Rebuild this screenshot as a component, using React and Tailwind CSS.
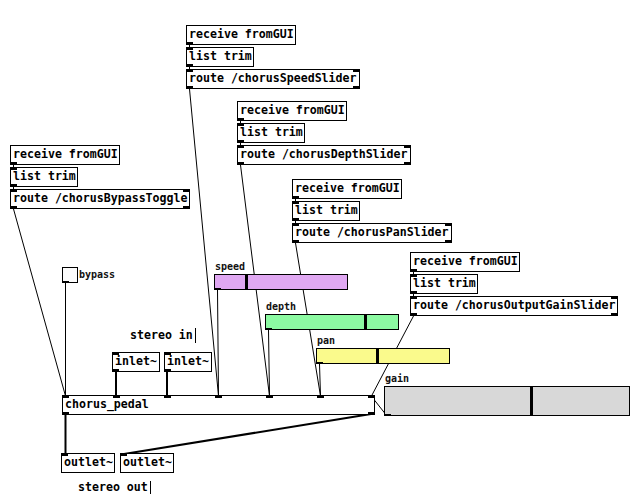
import React from "react";

const MONO = { fontFamily: '"DejaVu Sans Mono", "Liberation Mono", monospace' };

function Nubs({ n, w, side }) {
  const items = [];
  for (let i = 0; i < n; i++) {
    const left = n === 1 ? 0 : (i * (w - 7)) / (n - 1);
    items.push(
      <div
        key={i}
        className={"absolute h-[3px] w-[7px] bg-black " + (side === "top" ? "top-[-1px]" : "bottom-[-1px]")}
        style={{ left: left - 1 }}
      />
    );
  }
  return items;
}

function Box({ at, w, text, nin = 0, nout = 0 }) {
  const style = at ? { left: at[0], top: at[1], width: w } : { width: w };
  return (
    <div
      className={(at ? "absolute" : "relative") + " h-[20px] border border-black bg-white"}
      style={style}
    >
      <div
        className="pl-[2px] text-[11.6px] font-bold leading-[17px] text-black whitespace-nowrap"
        style={MONO}
      >
        {text}
      </div>
      <Nubs n={nin} w={w} side="top" />
      <Nubs n={nout} w={w} side="bottom" />
    </div>
  );
}

function Slider({ x, y, w, h, color, knob, label }) {
  return (
    <div className="absolute flex flex-col items-start gap-[1px]" style={{ left: x, top: y - 13 }}>
      <div className="pl-[1px] text-[10px] font-bold leading-[12px] text-[#111]" style={MONO}>
        {label}
      </div>
      <div className="relative border border-black" style={{ width: w, height: h, background: color }}>
        <div className="absolute top-0 bottom-0 w-[3px] bg-black" style={{ left: knob }} />
        <div className="absolute bottom-[-1px] left-[-1px] h-[2px] w-[7px] bg-black" />
      </div>
    </div>
  );
}

function Group({ x, y, route, rw }) {
  return (
    <div className="absolute flex flex-col items-start gap-[2px]" style={{ left: x, top: y }}>
      <Box w={110} text="receive fromGUI" nout={1} />
      <Box w={68} text="list trim" nin={1} nout={1} />
      <Box w={rw} text={route} nin={2} nout={2} />
    </div>
  );
}

function Comment({ x, y, text, bar }) {
  return (
    <div className="absolute flex items-center gap-[2px]" style={{ left: x, top: y }}>
      <span className="text-[11.6px] font-bold leading-[17px] text-black" style={MONO}>
        {text}
      </span>
      <span className="w-[1px] bg-black" style={{ height: bar }} />
    </div>
  );
}

const groups = [
  { x: 186, y: 25, route: "route /chorusSpeedSlider", rw: 174 },
  { x: 237, y: 101, route: "route /chorusDepthSlider", rw: 174 },
  { x: 292, y: 179, route: "route /chorusPanSlider", rw: 160 },
  { x: 410, y: 252, route: "route /chorusOutputGainSlider", rw: 208 },
  { x: 10, y: 145, route: "route /chorusBypassToggle", rw: 180 },
];

const thin = [
  [189.5, 89, 218.5, 396],
  [240.5, 165, 269.5, 396],
  [295.5, 243, 320.5, 396],
  [413.5, 316, 371.5, 396],
  [13.5, 209, 65.5, 396],
  [65.5, 283, 65.5, 396],
  [217.5, 290, 218.5, 396],
  [268.5, 330, 269.5, 396],
  [319.5, 364, 320.5, 396],
  [387, 416, 372, 397],
];

const thick = [
  [116, 372, 116, 396],
  [167, 372, 167, 396],
  [65.5, 415, 65.5, 453],
  [371, 414, 124, 454],
];

export default function App() {
  return (
    <div className="relative h-[498px] w-[634px] overflow-hidden bg-white">
      <svg className="absolute left-0 top-0" width="634" height="498">
        {groups.map((g, i) => (
          <g key={i}>
            <line x1={g.x + 3.5} y1={g.y + 20} x2={g.x + 3.5} y2={g.y + 22} stroke="black" strokeWidth="1" />
            <line x1={g.x + 3.5} y1={g.y + 42} x2={g.x + 3.5} y2={g.y + 44} stroke="black" strokeWidth="1" />
          </g>
        ))}
        {thin.map((l, i) => (
          <line key={i} x1={l[0]} y1={l[1]} x2={l[2]} y2={l[3]} stroke="black" strokeWidth="1" />
        ))}
        {thick.map((l, i) => (
          <line key={i} x1={l[0]} y1={l[1]} x2={l[2]} y2={l[3]} stroke="black" strokeWidth="2" />
        ))}
      </svg>

      {groups.map((g, i) => (
        <Group key={i} {...g} />
      ))}

      {/* bypass toggle */}
      <div className="absolute left-[62px] top-[267px] flex items-center gap-[1px]">
        <div className="relative h-[16px] w-[16px] border border-black bg-[#fcfcfc]">
          <div className="absolute bottom-[-1px] left-[-1px] h-[2px] w-[7px] bg-black" />
        </div>
        <div className="mt-[-1px] text-[10px] font-bold leading-[12px] text-[#111]" style={MONO}>
          bypass
        </div>
      </div>

      <Slider x={214} y={274} w={134} h={16} color="#e0a8f2" knob={30} label="speed" />
      <Slider x={265} y={314} w={134} h={16} color="#8cfaa2" knob={98} label="depth" />
      <Slider x={316} y={348} w={134} h={16} color="#fafa8c" knob={59} label="pan" />
      <Slider x={384} y={386} w={246} h={30} color="#d8d8d8" knob={145} label="gain" />

      <Comment x={130} y={327} text="stereo in" bar={15} />

      <div className="absolute left-[112px] top-[352px] flex gap-[4px]">
        <Box w={48} text="inlet~" nin={1} nout={1} />
        <Box w={48} text="inlet~" nin={1} nout={1} />
      </div>

      <Box at={[62, 395]} w={313} text="chorus_pedal" nin={7} nout={2} />

      <div className="absolute left-[61px] top-[453px] flex flex-col items-start gap-[6px]">
        <div className="flex gap-[5px]">
          <Box w={54} text="outlet~" nin={1} />
          <Box w={54} text="outlet~" nin={1} />
        </div>
        <div className="ml-[17px] flex items-center gap-[2px]">
          <span className="text-[11.6px] font-bold leading-[17px] text-black" style={MONO}>
            stereo out
          </span>
          <span className="h-[13px] w-[1px] bg-black" />
        </div>
      </div>
    </div>
  );
}
